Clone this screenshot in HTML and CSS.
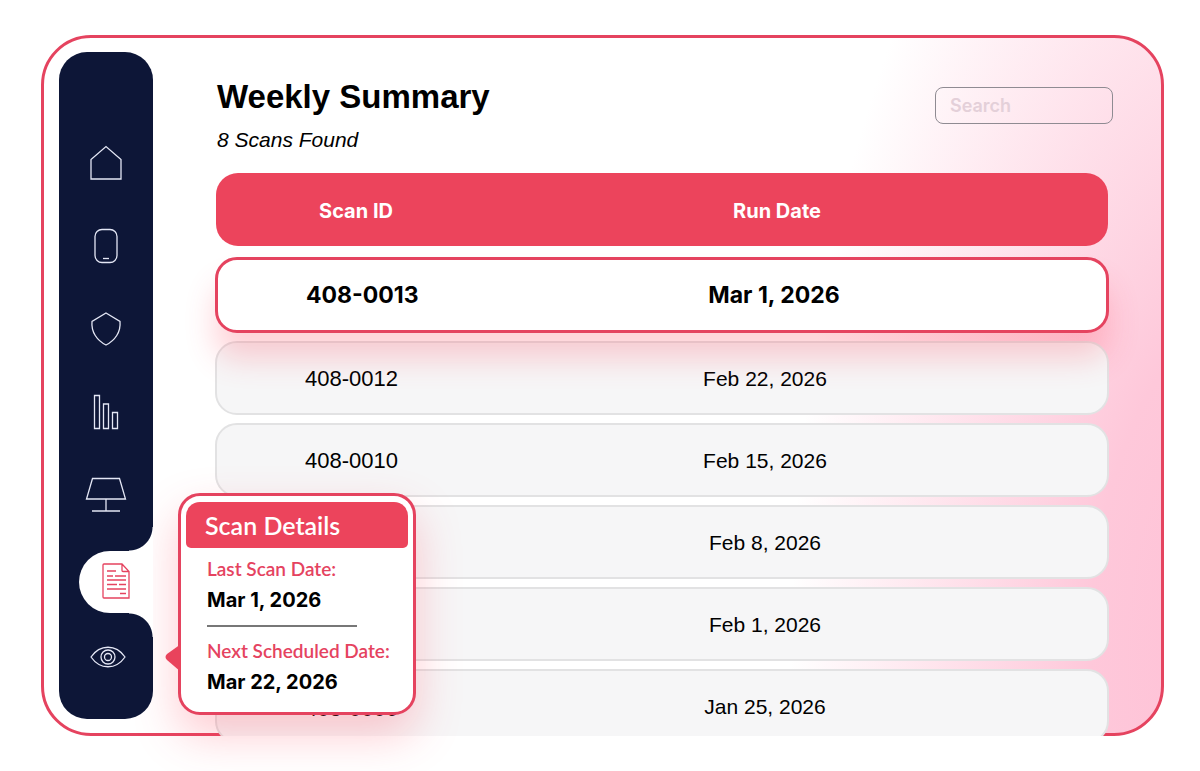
FILE: index.html
```html
<!DOCTYPE html>
<html lang="en">
<head>
    <meta charset="UTF-8">
    <meta name="viewport" content="width=device-width, initial-scale=1.0">
    <title>Weekly Summary</title>
    <link rel="stylesheet" href="styles.css">
</head>
<body>
    <div class="panel">
        <nav class="sidebar" aria-label="Main">
            <a class="nav-item" href="#" aria-label="Home">
                <svg width="34" height="36" viewBox="0 0 34 36"><path d="M2 34V14.500L17 1.500l15 13V34z"/></svg>
            </a>
            <a class="nav-item" href="#" aria-label="Devices">
                <svg width="24" height="36" viewBox="0 0 24 36"><rect x="1" y="1.500" width="22" height="33" rx="7"/><path d="M9 30.500h6"/></svg>
            </a>
            <a class="nav-item" href="#" aria-label="Security">
                <svg width="32" height="36" viewBox="0 0 32 36"><path d="M16 2l14 8.500C31 21 25 29.500 16 34 7 29.500 1 21 2 10.500z"/></svg>
            </a>
            <a class="nav-item" href="#" aria-label="Charts">
                <svg width="26" height="36" viewBox="0 0 26 36"><path d="M1.500 1.500h5v33h-5zM10.500 10h5v24.500h-5zM19.500 18.500h5v16h-5z"/></svg>
            </a>
            <a class="nav-item" href="#" aria-label="Presentations">
                <svg width="42" height="36" viewBox="0 0 42 36"><path d="M7.500 1.500h27L40.500 22h-39zM21 22v12M7 34h28"/></svg>
            </a>
            <a class="nav-item active" href="#" aria-label="Scans">
                <svg width="28" height="38" viewBox="0 0 28 38"><path d="M2 2h18l7 7.500V36H2a1 1 0 0 1-1-1V3a1 1 0 0 1 1-1zM20 2v6.500a1 1 0 0 0 1 1h6M5 9h9M5 14h6M13 14h11M5 18h19M5 22.500h10M17 22.500h7M5 27h19M18 31.500h6"/></svg>
            </a>
            <a class="nav-item watch" href="#" aria-label="Watch">
                <svg width="36" height="22" viewBox="0 0 36 22"><path d="M1 11C10-2 26-2 35 11 26 24 10 24 1 11z"/><circle cx="18" cy="11" r="7"/><circle cx="18" cy="11" r="3.500"/></svg>
            </a>
        </nav>

        <main class="content">
            <header class="page-header">
                <div>
                    <h1>Weekly Summary</h1>
                    <p class="subtitle">8 Scans Found</p>
                </div>
                <input class="search" type="search" placeholder="Search" aria-label="Search">
            </header>

            <table class="scans">
                <thead>
                    <tr><th>Scan ID</th><th>Run Date</th></tr>
                </thead>
                <tbody>
                    <tr class="selected"><td>408-0013</td><td>Mar 1, 2026</td></tr>
                    <tr><td>408-0012</td><td>Feb 22, 2026</td></tr>
                    <tr><td>408-0010</td><td>Feb 15, 2026</td></tr>
                    <tr><td></td><td>Feb 8, 2026</td></tr>
                    <tr><td></td><td>Feb 1, 2026</td></tr>
                    <tr><td class="partial">408-0006</td><td>Jan 25, 2026</td></tr>
                </tbody>
            </table>
        </main>

        <!-- popup over the table, points at the sidebar -->
        <aside class="details">
            <svg class="pointer" width="16" height="30" viewBox="0 0 16 30"><path d="M16 1v28L2 17q-3-3 0-6z"/></svg>
            <h2>Scan Details</h2>
            <dl>
                <dt>Last Scan Date:</dt>
                <dd>Mar 1, 2026</dd>
                <dt class="next">Next Scheduled Date:</dt>
                <dd>Mar 22, 2026</dd>
            </dl>
        </aside>
    </div>
</body>
</html>
```
FILE: styles.css
```css
* {
    box-sizing: border-box;
}
body {
    margin: 0;
    min-height: 100vh;
    padding: 35px 36px 35px 41px;
    display: flex;
    background-color: #fff;
    color: #000;
    font-family: "Liberation Sans", Arial, sans-serif;
    overflow: hidden;
}
.panel {
    position: relative;
    flex: 1;
    display: flex;
    height: calc(100vh - 70px);
    border: 3px solid #e5435f;
    border-radius: 50px;
    background: radial-gradient(460px 1000px at 108% 90%, #ffbfd5, #fec8da 35%, #fff);
}

/* sidebar */
.sidebar {
    position: relative;
    z-index: 1;
    width: 94px;
    margin: 14px 0 14px 15px;
    padding-top: 69px;
    border-radius: 28px;
    background-color: #0d1637;
}
.nav-item {
    position: relative;
    height: 83px;
    display: flex;
    align-items: center;
    justify-content: center;
}
.nav-item svg {
    fill: none;
    stroke: #e4e7f5;
    stroke-width: 1.3;
}
.nav-item.active {
    height: 62px;
    margin: 15px 0 2px 20px;
    padding-bottom: 2px;
    border-radius: 31px 0 0 31px;
    background-color: #fff;
}
.nav-item.active svg {
    stroke: #e5435f;
}
.nav-item.watch {
    padding-left: 4px;
}
/* rounded corners above and below the active tab */
.nav-item.active::before,
.nav-item.active::after {
    content: "";
    position: absolute;
    right: 0;
    width: 24px;
    height: 24px;
}
.nav-item.active::before {
    bottom: 100%;
    background: radial-gradient(circle at 0 0, #0d1637 23px, #fff 24px);
}
.nav-item.active::after {
    top: 100%;
    background: radial-gradient(circle at 0 100%, #0d1637 23px, #fff 24px);
}

/* main */
.content {
    flex: 1;
    margin-bottom: -3px;
    padding: 37px 52px 0 62px;
    overflow: hidden;
}
.page-header {
    display: flex;
    justify-content: space-between;
    align-items: flex-start;
    height: 98px;
    padding-left: 2px;
}
h1 {
    margin: 0;
    font-size: 33px;
    line-height: 44px;
}
.subtitle {
    margin: 9px 0 0;
    font-size: 21px;
    line-height: 24px;
    font-style: italic;
}
.search {
    width: 178px;
    height: 37px;
    margin-top: 12px;
    margin-right: -4px;
    padding: 0 14px;
    border: 1px solid #8f8b92;
    border-radius: 8px;
    background: transparent;
    font: 600 18px Inter, sans-serif;
}
.search::placeholder {
    color: #e4d0d9;
}

.scans {
    display: block;
}
.scans thead {
    display: block;
    margin: 0 1px 11px;
}
.scans tbody {
    display: grid;
    gap: 8px;
}
.scans tr {
    display: grid;
    grid-template-columns: 280px 536px;
    align-items: center;
    height: 74px;
    padding-top: 2px;
    border: 2px solid #e2e2e3;
    border-radius: 22px;
    background-color: #f6f6f7;
    font-size: 22px;
}
.scans td,
.scans th {
    padding: 0;
}
.scans td:first-child {
    padding-left: 88px;
    text-align: left;
}
.scans td:last-child,
.scans th {
    text-align: center;
}
.scans td:last-child {
    font-size: 21px;
}
.scans thead tr {
    grid-template-columns: 280px 562px;
    height: 73px;
    border: 0;
    background-color: #ec445c;
    color: #fff;
    font: 600 20px Inter, sans-serif;
}
.scans .selected {
    position: relative;
    grid-template-columns: 280px 552px;
    height: 76px;
    padding-top: 0;
    border: 3px solid #e5435f;
    background-color: #fff;
    font: 700 23px Inter, sans-serif;
    box-shadow: 0 26px 30px rgba(255, 70, 90, 0.24);
}
.scans .selected td:last-child {
    font-size: 23px;
}
.scans .partial {
    padding-top: 4px;
}

/* details popup */
.details {
    position: absolute;
    left: 134px;
    bottom: 18px;
    width: 238px;
    height: 222px;
    padding: 6px 5px;
    border: 3px solid #e5435f;
    border-radius: 22px;
    background-color: #fff;
    box-shadow: 0 20px 45px rgba(255, 70, 90, 0.28);
}
.pointer {
    position: absolute;
    right: 100%;
    top: 147px;
    fill: #e9435c;
}
.details h2 {
    margin: 0;
    padding-left: 19px;
    border-radius: 14px 14px 5px 5px;
    background-color: #ec445c;
    color: #fff;
    font: 600 25px/46px Lato, sans-serif;
}
.details dl {
    margin: 8px 0 0;
    padding-left: 21px;
}
.details dt {
    color: #e5435f;
    font: 600 19px/26px Lato, sans-serif;
    white-space: nowrap;
}
.details dd {
    margin: 4px 0 0;
    font: 700 20px/28px Inter, sans-serif;
}
.details .next {
    position: relative;
    margin-top: 24px;
}
.details .next::before {
    content: "";
    position: absolute;
    top: -13px;
    left: 0;
    width: 150px;
    border-top: 2px solid #777;
}
```
